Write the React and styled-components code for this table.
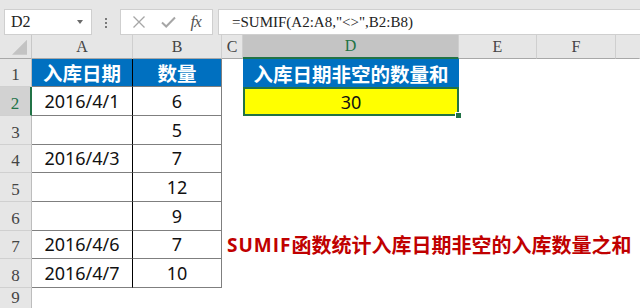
import React from "react";
import styled, { createGlobalStyle, css } from "styled-components";

const GlobalStyle = createGlobalStyle`
  * { box-sizing: border-box; }
  body {
    margin: 0;
    width: 640px;
    height: 308px;
    overflow: hidden;
    background: #ffffff;
    font-family: "Noto Sans", "Noto Sans CJK SC", sans-serif;
  }
`;

const GREEN = "#217346";

const Page = styled.div`
  display: flex;
  flex-direction: column;
  width: 640px;
  height: 308px;
`;

const Toolbar = styled.div`
  display: flex;
  align-items: flex-start;
  height: 43px;
  padding: 9px 0 0 4px;
  background: #e6e6e6;
`;

const Box = styled.div`
  display: flex;
  align-items: center;
  height: 26px;
  background: #ffffff;
  border: 1px solid #cfcfcf;
`;

const NameBox = styled(Box)`
  width: 88px;
  justify-content: space-between;
  padding: 0 6px 0 6px;
  font-family: "Liberation Serif", serif;
  font-size: 16px;
  color: #222;
`;

const Caret = styled.span`
  width: 0;
  height: 0;
  border-left: 3px solid transparent;
  border-right: 3px solid transparent;
  border-top: 4px solid #6a6a6a;
  margin-right: 2px;
`;

const Grip = styled.div`
  display: flex;
  flex-direction: column;
  align-items: center;
  gap: 2px;
  width: 28px;
  padding-top: 9px;
  span {
    width: 2px;
    height: 2px;
    background: #7a7a7a;
  }
`;

const FxBox = styled(Box)`
  width: 93px;
  justify-content: space-around;
  padding: 0 4px;
`;

const FxLabel = styled.span`
  font-family: "Liberation Serif", serif;
  font-style: italic;
  font-size: 17px;
  color: #555;
  letter-spacing: -1px;
`;

const Formula = styled(Box)`
  flex: 1;
  margin-left: 5px;
  margin-right: -2px;
  padding-left: 13px;
  font-family: "Liberation Serif", serif;
  font-size: 15px;
  color: #222;
`;

const Sheet = styled.div`
  flex: 1;
  display: grid;
  grid-template-columns: 32px 101px 89px 21px 216px 78px 79px 24px;
  grid-template-rows: 23.7px repeat(8, 28.67px) 1fr;
`;

const Corner = styled.div`
  position: relative;
  background: #e6e6e6;
  border-right: 1px solid #c8c8c8;
  border-bottom: 1px solid #a8a8a8;
  &::after {
    content: "";
    position: absolute;
    right: 4px;
    bottom: 3px;
    width: 15px;
    height: 15px;
    background: #c3c3c3;
    clip-path: polygon(100% 0, 100% 100%, 0 100%);
  }
`;

const ColHead = styled.div`
  display: flex;
  align-items: center;
  justify-content: center;
  background: ${(p) => (p.$active ? "#c4c4c4" : "#e6e6e6")};
  color: ${(p) => (p.$active ? GREEN : "#444")};
  border-right: 1px solid ${(p) => (p.$last ? "transparent" : "#cfcfcf")};
  border-bottom: ${(p) => (p.$active ? `2px solid ${GREEN}` : "1px solid #a8a8a8")};
  font-family: "Liberation Serif", serif;
  font-size: 16px;
  padding-top: 1px;
`;

const RowHead = styled.div`
  display: flex;
  align-items: flex-end;
  justify-content: center;
  padding-bottom: 1px;
  background: ${(p) => (p.$active ? "#d2d2d2" : "#e6e6e6")};
  color: ${(p) => (p.$active ? GREEN : "#444")};
  border-right: ${(p) => (p.$active ? `2px solid ${GREEN}` : "1px solid #bdbdbd")};
  border-bottom: 1px solid #d0d0d0;
  font-family: "Liberation Serif", serif;
  font-size: 17px;
`;

const Cell = styled.div`
  position: relative;
  display: flex;
  align-items: center;
  justify-content: center;
  background: #ffffff;
  color: #111;
  font-family: "Noto Sans", "Noto Sans CJK SC", sans-serif;
  font-size: 18px;
  white-space: nowrap;
  ${(p) =>
    p.$table &&
    css`
      border-bottom: 1px solid #7f7f7f;
      border-right: 1px solid ${p.$divider ? "#000" : "#7f7f7f"};
    `}
  ${(p) =>
    p.$head &&
    css`
      background: #0070c0;
      color: #ffffff;
      font-family: "Noto Sans CJK SC", sans-serif;
      font-weight: 700;
      font-size: 19.5px;
    `}
  ${(p) =>
    p.$result &&
    css`
      background: #ffff00;
      border: 2px solid ${GREEN};
    `}
`;

const Handle = styled.span`
  position: absolute;
  right: -5px;
  bottom: -5px;
  width: 7px;
  height: 7px;
  background: ${GREEN};
  border: 1px solid #ffffff;
`;

const Note = styled.div`
  grid-column: 4 / -1;
  display: flex;
  align-items: center;
  padding-left: 5px;
  color: #c00000;
  font-family: "Noto Sans CJK SC", sans-serif;
  font-weight: 700;
  font-size: 20px;
  white-space: nowrap;
`;

const Latin = styled.span`
  font-family: "Open Sans", sans-serif;
  font-size: 19px;
  letter-spacing: 1px;
`;

const Blank = styled.div`
  background: #ffffff;
`;

const columns = ["A", "B", "C", "D", "E", "F", ""];

const rows = [
  { a: "入库日期", b: "数量", d: "入库日期非空的数量和", head: true },
  { a: "2016/4/1", b: "6", d: "30" },
  { a: "", b: "5" },
  { a: "2016/4/3", b: "7" },
  { a: "", b: "12" },
  { a: "", b: "9" },
  { a: "2016/4/6", b: "7", note: true },
  { a: "2016/4/7", b: "10" },
];

const Cross = () => (
  <svg width="14" height="14" viewBox="0 0 14 14">
    <path d="M1.5 1.5 L12.5 12.5 M12.5 1.5 L1.5 12.5" stroke="#a6a6a6" strokeWidth="1.3" fill="none" />
  </svg>
);

const Check = () => (
  <svg width="15" height="12" viewBox="0 0 15 12">
    <path d="M1 6.5 L5.2 10.5 L14 1.5" stroke="#a6a6a6" strokeWidth="2" fill="none" />
  </svg>
);

const App = () => (
  <Page>
    <GlobalStyle />
    <Toolbar>
      <NameBox>
        D2
        <Caret />
      </NameBox>
      <Grip>
        <span />
        <span />
        <span />
      </Grip>
      <FxBox>
        <Cross />
        <Check />
        <FxLabel>fx</FxLabel>
      </FxBox>
      <Formula>=SUMIF(A2:A8,"&lt;&gt;",B2:B8)</Formula>
    </Toolbar>
    <Sheet>
      <Corner />
      {columns.map((c, i) => (
        <ColHead key={i} $active={c === "D"} $last={i === columns.length - 1}>
          {c}
        </ColHead>
      ))}
      {rows.map((r, i) => (
        <React.Fragment key={i}>
          <RowHead $active={i === 1}>{i + 1}</RowHead>
          <Cell $table $divider $head={r.head}>
            {r.a}
          </Cell>
          <Cell $table $head={r.head}>
            {r.b}
          </Cell>
          {r.note ? (
            <Note>
              <Latin>SUMIF</Latin>函数统计入库日期非空的入库数量之和
            </Note>
          ) : (
            <>
              <Blank />
              {r.d ? (
                <Cell $head={r.head} $result={!r.head}>
                  {r.d}
                  {!r.head && <Handle />}
                </Cell>
              ) : (
                <Blank />
              )}
              <Blank />
              <Blank />
              <Blank />
            </>
          )}
        </React.Fragment>
      ))}
      <RowHead>9</RowHead>
    </Sheet>
  </Page>
);

export default App;
